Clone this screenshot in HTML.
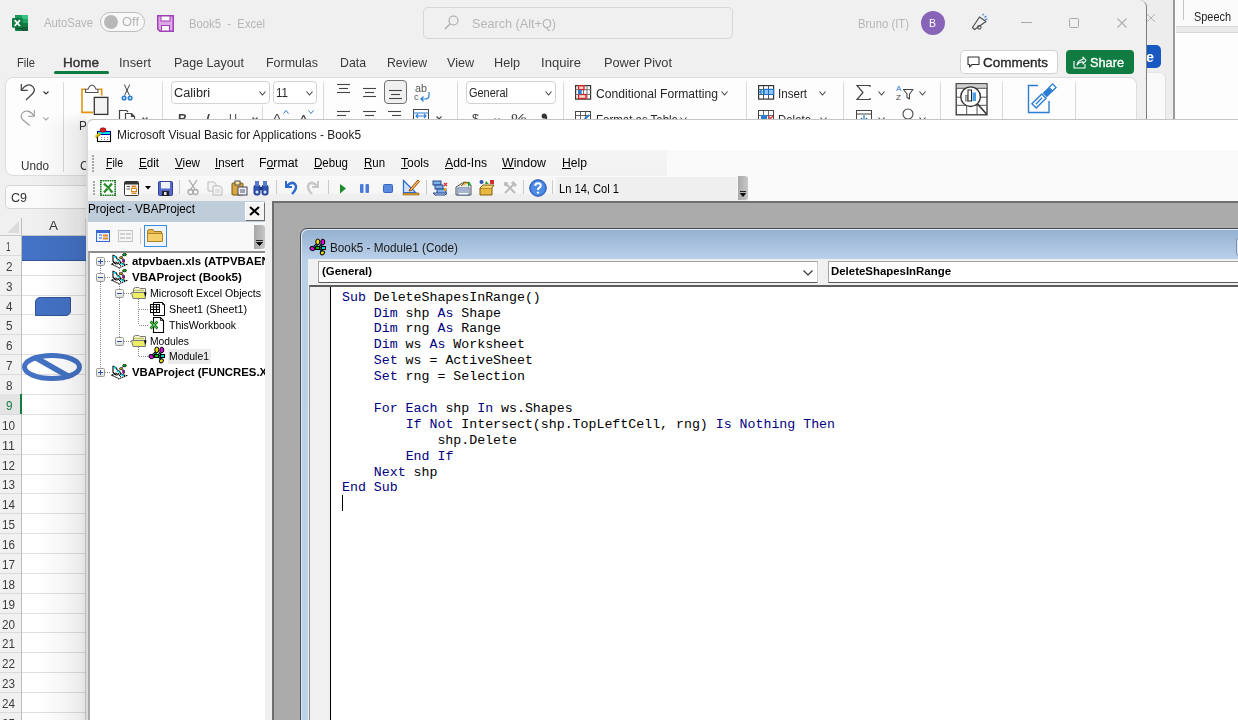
<!DOCTYPE html>
<html><head><meta charset="utf-8"><title>VBA</title><style>
*{margin:0;padding:0;box-sizing:border-box}
html,body{width:1238px;height:720px;overflow:hidden;background:#fdfdfd;font-family:"Liberation Sans",sans-serif;position:relative}
.a{position:absolute}
.t{position:absolute;white-space:pre;line-height:1}
svg.a{overflow:visible}
.k{color:#00007f}
</style></head><body>
<div class="a" style="left:1146px;top:0px;width:92px;height:720px;background:#fdfdfd;"></div>
<div class="a" style="left:1146px;top:0px;width:28px;height:120px;background:#ededed;"></div>
<div class="a" style="left:1173px;top:0px;width:2px;height:120px;background:#9a9a9a;"></div>
<div class="a" style="left:1176px;top:0px;width:62px;height:26px;background:#fbfbfb;"></div>
<div class="a" style="left:1176px;top:26px;width:62px;height:7px;background:#ebebeb;border-top:1px solid #d6d6d6;border-bottom:1px solid #d6d6d6;"></div>
<div class="a" style="left:1183px;top:0px;width:1px;height:20px;background:#c6c6c6;"></div>
<div class="t" style="left:1194px;top:11px;font-size:12.5px;color:#1f1f1f;font-family:'Liberation Sans',sans-serif;transform:scaleX(0.8727);transform-origin:0 0;">Speech</div>
<svg class="a" style="left:1146px;top:13px;" width="10" height="10" viewBox="0 0 10 10"><path d="M1 1L9 9M9 1L1 9" stroke="#b4b4b4" stroke-width="1"/></svg>
<div class="a" style="left:1140px;top:45px;width:21px;height:23px;background:#1858c3;border-radius:5px;"></div>
<div class="t" style="left:1146px;top:49px;font-size:15px;color:#fff;font-family:'Liberation Sans',sans-serif;font-weight:bold;transform:scaleX(0.9589);transform-origin:0 0;">e</div>
<div class="a" style="left:1146px;top:72px;width:20px;height:48px;background:#f9f9f9;border-top-right-radius:6px;border-right:1px solid #dedede;border-top:1px solid #e6e6e6;"></div>
<div class="a" style="left:0px;top:0px;width:1147px;height:720px;background:#f0f0f0;border-right:1px solid #7d7d7d;border-top-right-radius:7px;"></div>
<svg class="a" style="left:12px;top:15px;" width="17" height="17" viewBox="0 0 17 17"><rect x="3" y="0" width="13" height="16" rx="1" fill="#107c41"/><rect x="3" y="0" width="6.5" height="4" fill="#1f9560"/><rect x="9.5" y="0" width="6.5" height="4" fill="#33c481"/><rect x="9.5" y="4" width="6.5" height="4" fill="#21a366"/><rect x="9.5" y="12" width="6.5" height="4" fill="#185c37"/><rect x="3" y="12.5" width="8" height="1.5" fill="#0b3f22" opacity="0.6"/><rect x="0" y="3" width="10.7" height="9.7" rx="1" fill="#107c41"/><path d="M2.6 5.2L8 11M8 5.2L2.6 11" stroke="#fff" stroke-width="1.7"/></svg>
<div class="t" style="left:44px;top:17px;font-size:12.5px;color:#b6b6b6;font-family:'Liberation Sans',sans-serif;transform:scaleX(0.9039);transform-origin:0 0;">AutoSave</div>
<div class="a" style="left:100px;top:12px;width:45px;height:20px;background:#f8f8f8;border:1px solid #bdbdbd;border-radius:10px;"></div>
<div class="a" style="left:104px;top:15px;width:14px;height:14px;background:#b8b8b8;border-radius:7px;"></div>
<div class="t" style="left:122px;top:16px;font-size:12.5px;color:#b6b6b6;font-family:'Liberation Sans',sans-serif;transform:scaleX(1.0339);transform-origin:0 0;">Off</div>
<svg class="a" style="left:157px;top:15px;" width="17" height="17" viewBox="0 0 17 17"><path d="M0.75 0.75H16.25V16.25H3L0.75 14Z" fill="#dfa6ea" stroke="#a040b8" stroke-width="1.5"/><rect x="4" y="1" width="9" height="5" fill="#fafafa" stroke="#a040b8" stroke-width="1"/><rect x="4.5" y="10.5" width="8" height="5.5" fill="#fafafa" stroke="#a040b8" stroke-width="1"/></svg>
<div class="t" style="left:189px;top:18px;font-size:12.5px;color:#b6b6b6;font-family:'Liberation Sans',sans-serif;transform:scaleX(0.9041);transform-origin:0 0;">Book5  -  Excel</div>
<div class="a" style="left:423px;top:7px;width:310px;height:32px;background:#f0f0f0;border:1px solid #d6d6d6;border-radius:5px;"></div>
<svg class="a" style="left:444px;top:15px;" width="15" height="15" viewBox="0 0 15 15"><circle cx="9.5" cy="5.5" r="4.5" fill="none" stroke="#a6a6a6" stroke-width="1.1"/><path d="M6.3 8.7L1 14" stroke="#a6a6a6" stroke-width="1.2"/></svg>
<div class="t" style="left:472px;top:18px;font-size:12.5px;color:#b6b6b6;font-family:'Liberation Sans',sans-serif;transform:scaleX(1.0118);transform-origin:0 0;">Search (Alt+Q)</div>
<div class="t" style="left:858px;top:18px;font-size:12.5px;color:#b6b6b6;font-family:'Liberation Sans',sans-serif;transform:scaleX(0.9064);transform-origin:0 0;">Bruno (IT)</div>
<div class="a" style="left:921px;top:11px;width:24px;height:24px;background:#8764b8;border-radius:12px;"></div>
<div class="t" style="left:929px;top:18px;font-size:10.5px;color:#fff;font-family:'Liberation Sans',sans-serif;transform:scaleX(0.9995);transform-origin:0 0;">B</div>
<svg class="a" style="left:971px;top:13px;" width="18" height="18" viewBox="0 0 18 18"><path d="M1.5 14.5L8.5 4L15 8.5L3.5 16.5Z" fill="none" stroke="#505050" stroke-width="1.2" stroke-linejoin="round"/><circle cx="8.3" cy="14.3" r="1.8" fill="none" stroke="#505050" stroke-width="1.1"/><path d="M11.5 2.5L12.5 0.8M13.5 4.5L15.5 3M14 6.5L16.5 6" stroke="#2d7fd0" stroke-width="1.1"/></svg>
<div class="a" style="left:1021px;top:22px;width:11px;height:1px;background:#a8a8a8;"></div>
<div class="a" style="left:1069px;top:18px;width:10px;height:10px;border:1px solid #a8a8a8;border-radius:1.5px;"></div>
<svg class="a" style="left:1117px;top:18px;" width="10" height="10" viewBox="0 0 10 10"><path d="M0.5 0.5L9.5 9.5M9.5 0.5L0.5 9.5" stroke="#b0b0b0" stroke-width="1.1"/></svg>
<div class="t" style="left:17px;top:56px;font-size:13px;color:#3a3a3a;font-family:'Liberation Sans',sans-serif;transform:scaleX(0.8593);transform-origin:0 0;">File</div>
<div class="t" style="left:63px;top:56px;font-size:13px;color:#333;font-family:'Liberation Sans',sans-serif;transform:scaleX(1.0381);transform-origin:0 0;-webkit-text-stroke:0.4px #333;">Home</div>
<div class="t" style="left:119px;top:56px;font-size:13px;color:#3a3a3a;font-family:'Liberation Sans',sans-serif;transform:scaleX(0.9842);transform-origin:0 0;">Insert</div>
<div class="t" style="left:174px;top:56px;font-size:13px;color:#3a3a3a;font-family:'Liberation Sans',sans-serif;transform:scaleX(0.9588);transform-origin:0 0;">Page Layout</div>
<div class="t" style="left:266px;top:56px;font-size:13px;color:#3a3a3a;font-family:'Liberation Sans',sans-serif;transform:scaleX(0.9598);transform-origin:0 0;">Formulas</div>
<div class="t" style="left:340px;top:56px;font-size:13px;color:#3a3a3a;font-family:'Liberation Sans',sans-serif;transform:scaleX(0.9468);transform-origin:0 0;">Data</div>
<div class="t" style="left:387px;top:56px;font-size:13px;color:#3a3a3a;font-family:'Liberation Sans',sans-serif;transform:scaleX(0.9384);transform-origin:0 0;">Review</div>
<div class="t" style="left:447px;top:56px;font-size:13px;color:#3a3a3a;font-family:'Liberation Sans',sans-serif;transform:scaleX(0.9662);transform-origin:0 0;">View</div>
<div class="t" style="left:494px;top:56px;font-size:13px;color:#3a3a3a;font-family:'Liberation Sans',sans-serif;transform:scaleX(0.9724);transform-origin:0 0;">Help</div>
<div class="t" style="left:541px;top:56px;font-size:13px;color:#3a3a3a;font-family:'Liberation Sans',sans-serif;transform:scaleX(1.0063);transform-origin:0 0;">Inquire</div>
<div class="t" style="left:604px;top:56px;font-size:13px;color:#3a3a3a;font-family:'Liberation Sans',sans-serif;transform:scaleX(0.9803);transform-origin:0 0;">Power Pivot</div>
<div class="a" style="left:54px;top:71px;width:55px;height:3px;background:#107c41;border-radius:1.5px;"></div>
<div class="a" style="left:960px;top:50px;width:98px;height:24px;background:#ffffff;border:1px solid #d2d2d2;border-radius:4px;"></div>
<svg class="a" style="left:967px;top:56px;" width="13" height="12" viewBox="0 0 13 12"><path d="M1 1H12V8.5H5L2.5 11V8.5H1Z" fill="none" stroke="#333" stroke-width="1.1" stroke-linejoin="round"/></svg>
<div class="t" style="left:983px;top:56px;font-size:13.5px;color:#262626;font-family:'Liberation Sans',sans-serif;transform:scaleX(0.9959);transform-origin:0 0;-webkit-text-stroke:0.35px #262626;">Comments</div>
<div class="a" style="left:1066px;top:50px;width:68px;height:24px;background:#107c41;border-radius:4px;"></div>
<svg class="a" style="left:1073px;top:55px;" width="14" height="14" viewBox="0 0 14 14"><path d="M1 6V13H12V9" fill="none" stroke="#fff" stroke-width="1.1"/><path d="M4 10Q5 5 10 4.5V2L13 5.5L10 9V6.8Q6 7 4 10Z" fill="none" stroke="#fff" stroke-width="1.1" stroke-linejoin="round"/></svg>
<div class="t" style="left:1090px;top:56px;font-size:13.5px;color:#ffffff;font-family:'Liberation Sans',sans-serif;transform:scaleX(0.9438);transform-origin:0 0;-webkit-text-stroke:0.35px #fff;">Share</div>
<div class="a" style="left:5px;top:77px;width:1132px;height:99px;background:#fdfdfd;border:1px solid #dedede;border-radius:8px;"></div>
<svg class="a" style="left:19px;top:83px;" width="18" height="18" viewBox="0 0 18 18"><path d="M2.3 1V7.3H8.7" fill="none" stroke="#444" stroke-width="1.2"/><path d="M2.8 6.8C6 1.5 11 0.5 14 3.8C16.3 6.5 15.3 9 13 11.2L7 17" fill="none" stroke="#444" stroke-width="1.2"/></svg>
<svg class="a" style="left:43px;top:91px;" width="6" height="4" viewBox="0 0 6 4"><path d="M0.5 0.5L3.0 3L5.5 0.5" fill="none" stroke="#333" stroke-width="1.1"/></svg>
<svg class="a" style="left:19px;top:108px;" width="18" height="19" viewBox="0 0 18 19"><path d="M15.3 2V8.3H9" fill="none" stroke="#999" stroke-width="1.1"/><path d="M14.8 7.8C11.5 2.5 6.5 1.5 3.5 5C1.3 7.5 2 10 4 12L10.7 17.5" fill="none" stroke="#999" stroke-width="1.1"/></svg>
<svg class="a" style="left:43px;top:117px;" width="6" height="4" viewBox="0 0 6 4"><path d="M0.5 0.5L3.0 3L5.5 0.5" fill="none" stroke="#aaa" stroke-width="1.1"/></svg>
<div class="t" style="left:21px;top:160px;font-size:12.5px;color:#333;font-family:'Liberation Sans',sans-serif;transform:scaleX(0.9370);transform-origin:0 0;">Undo</div>
<div class="a" style="left:63px;top:82px;width:1px;height:90px;background:#dadada;"></div>
<svg class="a" style="left:80px;top:84px;" width="30" height="32" viewBox="0 0 30 32"><path d="M5.5 5.2H2V28.4H13M18.5 5.2H21.7V11.5" fill="none" stroke="#e8940c" stroke-width="1.6"/><path d="M5.5 8.5V5.2H8Q9.5 1.2 12 1.2Q14.5 1.2 16 5.2H18V8.5Z" fill="#fdfdfd" stroke="#555" stroke-width="1.1"/><rect x="14.3" y="13.4" width="13.5" height="17" fill="#f3f3f3" stroke="#333" stroke-width="1.3"/></svg>
<div class="t" style="left:79px;top:120px;font-size:12.5px;color:#333;font-family:'Liberation Sans',sans-serif;transform:scaleX(0.9385);transform-origin:0 0;">Paste</div>
<div class="t" style="left:80px;top:160px;font-size:12.5px;color:#333;font-family:'Liberation Sans',sans-serif;transform:scaleX(0.9719);transform-origin:0 0;">Clipboard</div>
<svg class="a" style="left:120px;top:84px;" width="14" height="17" viewBox="0 0 14 17"><path d="M4.3 0.5L9.5 11.5M9.8 0.5L4.5 11.5" stroke="#444" stroke-width="1"/><circle cx="4.1" cy="14" r="1.8" fill="#d8e8f8" stroke="#2b7cd3" stroke-width="1.5"/><circle cx="10.1" cy="14" r="1.8" fill="#d8e8f8" stroke="#2b7cd3" stroke-width="1.5"/></svg>
<svg class="a" style="left:118px;top:109px;" width="18" height="12" viewBox="0 0 18 12"><path d="M1.5 12V1.5H8.5L10 3" fill="none" stroke="#444" stroke-width="1.2"/><path d="M7.5 12V4.5H13.5L16.5 7.5V12M13.5 4.5V7.5H16.5" fill="none" stroke="#444" stroke-width="1.2"/></svg>
<svg class="a" style="left:142px;top:117px;" width="6" height="4" viewBox="0 0 6 4"><path d="M0.5 0.5L3.0 3L5.5 0.5" fill="none" stroke="#444" stroke-width="1.1"/></svg>
<div class="a" style="left:162px;top:82px;width:1px;height:90px;background:#dadada;"></div>
<div class="a" style="left:171px;top:81px;width:99px;height:23px;background:#ffffff;border:1px solid #d3d3d3;border-radius:4px;"></div>
<div class="t" style="left:174px;top:87px;font-size:12.5px;color:#262626;font-family:'Liberation Sans',sans-serif;transform:scaleX(1.0162);transform-origin:0 0;">Calibri</div>
<svg class="a" style="left:259px;top:91px;" width="7" height="5" viewBox="0 0 7 5"><path d="M0.5 0.5L3.5 4L6.5 0.5" fill="none" stroke="#444" stroke-width="1.1"/></svg>
<div class="a" style="left:273px;top:81px;width:44px;height:23px;background:#ffffff;border:1px solid #d3d3d3;border-radius:4px;"></div>
<div class="t" style="left:276px;top:87px;font-size:12.5px;color:#262626;font-family:'Liberation Sans',sans-serif;transform:scaleX(0.9247);transform-origin:0 0;">11</div>
<svg class="a" style="left:306px;top:91px;" width="7" height="5" viewBox="0 0 7 5"><path d="M0.5 0.5L3.5 4L6.5 0.5" fill="none" stroke="#444" stroke-width="1.1"/></svg>
<div class="t" style="left:178px;top:113px;font-size:12.5px;color:#444;font-family:'Liberation Sans',sans-serif;font-weight:bold;transform:scaleX(0.9970);transform-origin:0 0;">B</div>
<div class="t" style="left:205px;top:113px;font-size:12.5px;color:#444;font-family:'Liberation Sans',sans-serif;transform:scaleX(1.4398);transform-origin:0 0;font-style:italic;">I</div>
<div class="t" style="left:229px;top:113px;font-size:12.5px;color:#444;font-family:'Liberation Sans',sans-serif;transform:scaleX(0.8862);transform-origin:0 0;">U</div>
<svg class="a" style="left:252px;top:117px;" width="6" height="4" viewBox="0 0 6 4"><path d="M0.5 0.5L3.0 3L5.5 0.5" fill="none" stroke="#444" stroke-width="1.1"/></svg>
<div class="a" style="left:262px;top:106px;width:1px;height:14px;background:#dadada;"></div>
<div class="t" style="left:272px;top:113px;font-size:12.5px;color:#444;font-family:'Liberation Sans',sans-serif;transform:scaleX(1.1993);transform-origin:0 0;">A</div>
<svg class="a" style="left:283px;top:110px;" width="6" height="4" viewBox="0 0 6 4"><path d="M0.5 3.5L3 0.5L5.5 3.5" fill="none" stroke="#2b7cd3" stroke-width="1"/></svg>
<div class="t" style="left:299px;top:114px;font-size:11px;color:#444;font-family:'Liberation Sans',sans-serif;transform:scaleX(1.2266);transform-origin:0 0;">A</div>
<svg class="a" style="left:308px;top:110px;" width="6" height="4" viewBox="0 0 6 4"><path d="M0.5 0.5L3 3.5L5.5 0.5" fill="none" stroke="#2b7cd3" stroke-width="1"/></svg>
<div class="a" style="left:323px;top:82px;width:1px;height:90px;background:#dadada;"></div>
<svg class="a" style="left:337px;top:84px;" width="16" height="12" viewBox="0 0 16 12"><path d="M0 0.5H13" stroke="#444" stroke-width="1.1"/><path d="M2 4.5H11" stroke="#444" stroke-width="1.1"/><path d="M0 8.5H13" stroke="#444" stroke-width="1.1"/></svg>
<svg class="a" style="left:363px;top:88px;" width="16" height="12" viewBox="0 0 16 12"><path d="M0 0.5H13" stroke="#444" stroke-width="1.1"/><path d="M2 4.5H11" stroke="#444" stroke-width="1.1"/><path d="M0 8.5H13" stroke="#444" stroke-width="1.1"/></svg>
<div class="a" style="left:384px;top:80px;width:23px;height:24px;background:#f0f0f0;border:1.5px solid #707070;border-radius:4px;"></div>
<svg class="a" style="left:389px;top:90px;" width="16" height="12" viewBox="0 0 16 12"><path d="M0 0.5H13" stroke="#444" stroke-width="1.1"/><path d="M2 4.5H11" stroke="#444" stroke-width="1.1"/><path d="M0 8.5H13" stroke="#444" stroke-width="1.1"/></svg>
<div class="t" style="left:415px;top:84px;font-size:10px;color:#555;font-family:'Liberation Sans',sans-serif;transform:scaleX(1.0788);transform-origin:0 0;">ab</div>
<svg class="a" style="left:414px;top:92px;" width="17" height="10" viewBox="0 0 17 10"><text x="0" y="8" font-size="9" fill="#555" font-family="Liberation Sans">c</text><path d="M15 0V4Q15 7 11 7H7M9.5 4.5L7 7L9.5 9.5" fill="none" stroke="#2b7cd3" stroke-width="1.2"/></svg>
<svg class="a" style="left:337px;top:111px;" width="16" height="12" viewBox="0 0 16 12"><path d="M0 0.5H13" stroke="#444" stroke-width="1.1"/><path d="M0 4.5H9" stroke="#444" stroke-width="1.1"/><path d="M0 8.5H13" stroke="#444" stroke-width="1.1"/></svg>
<svg class="a" style="left:363px;top:111px;" width="16" height="12" viewBox="0 0 16 12"><path d="M0 0.5H13" stroke="#444" stroke-width="1.1"/><path d="M2 4.5H11" stroke="#444" stroke-width="1.1"/><path d="M0 8.5H13" stroke="#444" stroke-width="1.1"/></svg>
<svg class="a" style="left:388px;top:111px;" width="16" height="12" viewBox="0 0 16 12"><path d="M0 0.5H13" stroke="#444" stroke-width="1.1"/><path d="M4 4.5H13" stroke="#444" stroke-width="1.1"/><path d="M0 8.5H13" stroke="#444" stroke-width="1.1"/></svg>
<svg class="a" style="left:413px;top:109px;" width="16" height="11" viewBox="0 0 16 11"><rect x="0.5" y="0.5" width="15" height="11" fill="none" stroke="#444"/><path d="M0 4H16" stroke="#2b7cd3"/><path d="M3 7H13M5 5L3 7L5 9M11 5L13 7L11 9" fill="none" stroke="#2b7cd3" stroke-width="1.1"/></svg>
<svg class="a" style="left:436px;top:116px;" width="6" height="4" viewBox="0 0 6 4"><path d="M0.5 0.5L3.0 3L5.5 0.5" fill="none" stroke="#444" stroke-width="1.1"/></svg>
<div class="a" style="left:457px;top:82px;width:1px;height:90px;background:#dadada;"></div>
<div class="a" style="left:466px;top:81px;width:90px;height:23px;background:#ffffff;border:1px solid #d3d3d3;border-radius:4px;"></div>
<div class="t" style="left:469px;top:87px;font-size:12.5px;color:#262626;font-family:'Liberation Sans',sans-serif;transform:scaleX(0.8770);transform-origin:0 0;">General</div>
<svg class="a" style="left:545px;top:91px;" width="7" height="5" viewBox="0 0 7 5"><path d="M0.5 0.5L3.5 4L6.5 0.5" fill="none" stroke="#444" stroke-width="1.1"/></svg>
<div class="t" style="left:472px;top:113px;font-size:12.5px;color:#444;font-family:'Liberation Sans',sans-serif;transform:scaleX(1.0069);transform-origin:0 0;">$</div>
<svg class="a" style="left:494px;top:118px;" width="6" height="4" viewBox="0 0 6 4"><path d="M0.5 0.5L3.0 3L5.5 0.5" fill="none" stroke="#444" stroke-width="1.1"/></svg>
<div class="t" style="left:511px;top:112px;font-size:13px;color:#444;font-family:'Liberation Sans',sans-serif;transform:scaleX(1.3842);transform-origin:0 0;">%</div>
<svg class="a" style="left:541px;top:113px;" width="7" height="9" viewBox="0 0 7 9"><circle cx="3.2" cy="3" r="2.6" fill="#333"/><path d="M5.6 3.5Q5.5 7 2.5 8.5" fill="none" stroke="#333" stroke-width="1.6"/></svg>
<div class="a" style="left:563px;top:82px;width:1px;height:90px;background:#dadada;"></div>
<svg class="a" style="left:575px;top:85px;" width="17" height="15" viewBox="0 0 17 15"><rect x="0.6" y="0.6" width="15" height="13.5" fill="#fff" stroke="#333" stroke-width="1.2"/><path d="M3.5 0V14M8.5 0V14M12 0V14M0 4.7H16M0 9.5H16" stroke="#666" stroke-width="0.9"/><rect x="3.5" y="0.8" width="5.5" height="3.8" fill="#f6d8d0" stroke="#e02020" stroke-width="1.3"/><rect x="3.5" y="9.5" width="7.5" height="4" fill="#f6d8d0" stroke="#e02020" stroke-width="1.3"/><rect x="3.2" y="4.7" width="3.5" height="4.8" fill="#2b7cd3"/></svg>
<div class="t" style="left:596px;top:88px;font-size:12.5px;color:#262626;font-family:'Liberation Sans',sans-serif;transform:scaleX(0.9701);transform-origin:0 0;">Conditional Formatting</div>
<svg class="a" style="left:721px;top:91px;" width="7" height="5" viewBox="0 0 7 5"><path d="M0.5 0.5L3.5 4L6.5 0.5" fill="none" stroke="#444" stroke-width="1.1"/></svg>
<svg class="a" style="left:575px;top:111px;" width="17" height="10" viewBox="0 0 17 10"><rect x="0.5" y="0.5" width="15" height="10" fill="#fff" stroke="#444"/><path d="M0 4.5H16M5.5 0V11M10.5 0V11" stroke="#444" stroke-width="0.8"/><path d="M8 10L14 4" stroke="#2b7cd3" stroke-width="2"/></svg>
<div class="t" style="left:596px;top:114px;font-size:12.5px;color:#262626;font-family:'Liberation Sans',sans-serif;transform:scaleX(0.9173);transform-origin:0 0;">Format as Table</div>
<svg class="a" style="left:680px;top:117px;" width="7" height="5" viewBox="0 0 7 5"><path d="M0.5 0.5L3.5 4L6.5 0.5" fill="none" stroke="#444" stroke-width="1.1"/></svg>
<div class="a" style="left:746px;top:82px;width:1px;height:90px;background:#dadada;"></div>
<svg class="a" style="left:758px;top:85px;" width="17" height="15" viewBox="0 0 17 15"><rect x="0.6" y="0.6" width="15" height="13.5" fill="#fff" stroke="#333" stroke-width="1.2"/><path d="M5.5 0V14M10.5 0V14M0 4.5H16M0 9.5H16" stroke="#444" stroke-width="0.9"/><rect x="6" y="4.3" width="9.6" height="5.2" fill="#8cc4f4" stroke="#1a6fd0" stroke-width="1"/><path d="M10.5 4.5V9.5" stroke="#1a6fd0"/><path d="M7 6.9H1.5M4.2 4.3L1.5 6.9L4.2 9.5" fill="none" stroke="#2b8ce0" stroke-width="1.4"/></svg>
<div class="t" style="left:778px;top:88px;font-size:12.5px;color:#262626;font-family:'Liberation Sans',sans-serif;transform:scaleX(0.9276);transform-origin:0 0;">Insert</div>
<svg class="a" style="left:819px;top:91px;" width="7" height="5" viewBox="0 0 7 5"><path d="M0.5 0.5L3.5 4L6.5 0.5" fill="none" stroke="#444" stroke-width="1.1"/></svg>
<svg class="a" style="left:758px;top:110px;" width="17" height="12" viewBox="0 0 17 12"><rect x="0.5" y="0.5" width="15" height="12" fill="#fff" stroke="#444"/><path d="M0 5.5H16M5.5 0V13M10.5 0V13" stroke="#444" stroke-width="0.8"/><rect x="3" y="5" width="6" height="6" fill="#2b7cd3"/><path d="M10 6L15 11M15 6L10 11" stroke="#e23c3c" stroke-width="1.3"/></svg>
<div class="t" style="left:778px;top:114px;font-size:12.5px;color:#262626;font-family:'Liberation Sans',sans-serif;transform:scaleX(0.9133);transform-origin:0 0;">Delete</div>
<svg class="a" style="left:820px;top:117px;" width="7" height="5" viewBox="0 0 7 5"><path d="M0.5 0.5L3.5 4L6.5 0.5" fill="none" stroke="#444" stroke-width="1.1"/></svg>
<div class="a" style="left:843px;top:82px;width:1px;height:90px;background:#dadada;"></div>
<svg class="a" style="left:856px;top:85px;" width="15" height="15" viewBox="0 0 15 15"><path d="M14 2V0.5H1L7 7.5L1 14.5H14V13" fill="none" stroke="#444" stroke-width="1.2"/></svg>
<svg class="a" style="left:878px;top:91px;" width="7" height="5" viewBox="0 0 7 5"><path d="M0.5 0.5L3.5 4L6.5 0.5" fill="none" stroke="#444" stroke-width="1.1"/></svg>
<svg class="a" style="left:896px;top:84px;" width="19" height="17" viewBox="0 0 19 17"><text x="0" y="7" font-size="8" fill="#2b7cd3" font-family="Liberation Sans">A</text><text x="0" y="16" font-size="8" fill="#444" font-family="Liberation Sans">Z</text><path d="M7.5 5.5H17L13.5 10V15L11 13.5V10Z" fill="none" stroke="#444" stroke-width="1.1" stroke-linejoin="round"/></svg>
<svg class="a" style="left:919px;top:91px;" width="7" height="5" viewBox="0 0 7 5"><path d="M0.5 0.5L3.5 4L6.5 0.5" fill="none" stroke="#444" stroke-width="1.1"/></svg>
<svg class="a" style="left:856px;top:110px;" width="16" height="12" viewBox="0 0 16 12"><rect x="0.5" y="0.5" width="15" height="12" fill="#fff" stroke="#444"/><path d="M0 4H16" stroke="#444"/><path d="M8 5V11M5 8L8 11L11 8" fill="none" stroke="#2b7cd3" stroke-width="1.2"/></svg>
<svg class="a" style="left:878px;top:117px;" width="7" height="5" viewBox="0 0 7 5"><path d="M0.5 0.5L3.5 4L6.5 0.5" fill="none" stroke="#444" stroke-width="1.1"/></svg>
<svg class="a" style="left:902px;top:108px;" width="13" height="13" viewBox="0 0 13 13"><circle cx="6" cy="6" r="5" fill="none" stroke="#444" stroke-width="1.1"/></svg>
<svg class="a" style="left:919px;top:117px;" width="7" height="5" viewBox="0 0 7 5"><path d="M0.5 0.5L3.5 4L6.5 0.5" fill="none" stroke="#444" stroke-width="1.1"/></svg>
<div class="a" style="left:940px;top:82px;width:1px;height:90px;background:#dadada;"></div>
<svg class="a" style="left:955px;top:83px;" width="33" height="33" viewBox="0 0 33 33"><rect x="1.2" y="0.8" width="30.8" height="31" fill="#fff" stroke="#333" stroke-width="1.3"/><rect x="1.8" y="1.4" width="29.6" height="4" fill="#cfcfcf"/><path d="M1 5.3H32M1 14.2H32M1 22.3H32M11.7 22V32M22 22V32" stroke="#555" stroke-width="1"/><circle cx="15.6" cy="13.7" r="9.8" fill="#fff" stroke="#333" stroke-width="1.4"/><path d="M22.3 20.8L31.5 31" stroke="#333" stroke-width="1.6"/><rect x="10.5" y="12.5" width="2.5" height="5.5" fill="#bbb" stroke="#666" stroke-width="0.6"/><rect x="13" y="7" width="3.5" height="11" fill="#fff" stroke="#222" stroke-width="1"/><rect x="17.5" y="9.5" width="3.5" height="8.5" fill="#4a9ee8"/></svg>
<div class="a" style="left:1002px;top:82px;width:1px;height:90px;background:#dadada;"></div>
<svg class="a" style="left:1026px;top:83px;" width="32" height="32" viewBox="0 0 32 32"><path d="M2.5 17V29.5H23V18M2.5 17V2.5H12" fill="none" stroke="#2b7cd3" stroke-width="1.4"/><g transform="rotate(-45 13 18)"><rect x="6" y="15" width="14" height="6" fill="#fff" stroke="#2b7cd3" stroke-width="1.4"/><path d="M8.5 18H17.5" stroke="#2b7cd3" stroke-width="1.3"/></g><g transform="rotate(-45 23 8)"><rect x="17" y="5" width="8" height="6" fill="#2b7cd3"/><rect x="25.5" y="5.5" width="5" height="5" fill="#fff" stroke="#2b7cd3" stroke-width="1.3"/></g></svg>
<div class="a" style="left:1075px;top:82px;width:1px;height:90px;background:#dadada;"></div>
<div class="a" style="left:5px;top:185px;width:120px;height:24px;background:#fbfbfb;border:1px solid #d6d6d6;border-radius:4px;"></div>
<div class="t" style="left:11px;top:191px;font-size:13px;color:#303030;font-family:'Liberation Sans',sans-serif;transform:scaleX(0.9628);transform-origin:0 0;">C9</div>
<div class="a" style="left:0px;top:218px;width:87px;height:502px;background:#ffffff;"></div>
<div class="a" style="left:0px;top:218px;width:21px;height:502px;background:#f1f1f1;"></div>
<div class="a" style="left:22px;top:218px;width:65px;height:17px;background:#f0f0f0;"></div>
<svg class="a" style="left:6px;top:220px;" width="14" height="14" viewBox="0 0 14 14"><path d="M13 1V13H1Z" fill="#dcdcdc"/></svg>
<div class="t" style="left:49px;top:219px;font-size:13px;color:#3c3c3c;font-family:'Liberation Sans',sans-serif;transform:scaleX(1.0379);transform-origin:0 0;">A</div>
<div class="a" style="left:21px;top:218px;width:1px;height:502px;background:#bdbdbd;"></div>
<div class="a" style="left:0px;top:235px;width:87px;height:1px;background:#c8c8c8;"></div>
<div class="a" style="left:0px;top:255px;width:21px;height:1px;background:#dadada;"></div>
<div class="a" style="left:22px;top:255px;width:65px;height:1px;background:#e0e0e0;"></div>
<div class="t" style="left:6px;top:240px;font-size:13px;color:#3c3c3c;font-family:'Liberation Sans',sans-serif;transform:scaleX(0.6224);transform-origin:0 0;">1</div>
<div class="a" style="left:0px;top:275px;width:21px;height:1px;background:#dadada;"></div>
<div class="a" style="left:22px;top:275px;width:65px;height:1px;background:#e0e0e0;"></div>
<div class="t" style="left:5.5px;top:260px;font-size:13px;color:#3c3c3c;font-family:'Liberation Sans',sans-serif;transform:scaleX(0.8990);transform-origin:0 0;">2</div>
<div class="a" style="left:0px;top:295px;width:21px;height:1px;background:#dadada;"></div>
<div class="a" style="left:22px;top:295px;width:65px;height:1px;background:#e0e0e0;"></div>
<div class="t" style="left:5.5px;top:280px;font-size:13px;color:#3c3c3c;font-family:'Liberation Sans',sans-serif;transform:scaleX(0.8990);transform-origin:0 0;">3</div>
<div class="a" style="left:0px;top:314px;width:21px;height:1px;background:#dadada;"></div>
<div class="a" style="left:22px;top:314px;width:65px;height:1px;background:#e0e0e0;"></div>
<div class="t" style="left:5.5px;top:300px;font-size:13px;color:#3c3c3c;font-family:'Liberation Sans',sans-serif;transform:scaleX(0.8990);transform-origin:0 0;">4</div>
<div class="a" style="left:0px;top:334px;width:21px;height:1px;background:#dadada;"></div>
<div class="a" style="left:22px;top:334px;width:65px;height:1px;background:#e0e0e0;"></div>
<div class="t" style="left:5.5px;top:319px;font-size:13px;color:#3c3c3c;font-family:'Liberation Sans',sans-serif;transform:scaleX(0.8990);transform-origin:0 0;">5</div>
<div class="a" style="left:0px;top:354px;width:21px;height:1px;background:#dadada;"></div>
<div class="a" style="left:22px;top:354px;width:65px;height:1px;background:#e0e0e0;"></div>
<div class="t" style="left:5.5px;top:339px;font-size:13px;color:#3c3c3c;font-family:'Liberation Sans',sans-serif;transform:scaleX(0.8990);transform-origin:0 0;">6</div>
<div class="a" style="left:0px;top:374px;width:21px;height:1px;background:#dadada;"></div>
<div class="a" style="left:22px;top:374px;width:65px;height:1px;background:#e0e0e0;"></div>
<div class="t" style="left:5.5px;top:359px;font-size:13px;color:#3c3c3c;font-family:'Liberation Sans',sans-serif;transform:scaleX(0.8990);transform-origin:0 0;">7</div>
<div class="a" style="left:0px;top:394px;width:21px;height:1px;background:#dadada;"></div>
<div class="a" style="left:22px;top:394px;width:65px;height:1px;background:#e0e0e0;"></div>
<div class="t" style="left:5.5px;top:379px;font-size:13px;color:#3c3c3c;font-family:'Liberation Sans',sans-serif;transform:scaleX(0.8990);transform-origin:0 0;">8</div>
<div class="a" style="left:0px;top:414px;width:21px;height:1px;background:#dadada;"></div>
<div class="a" style="left:22px;top:414px;width:65px;height:1px;background:#e0e0e0;"></div>
<div class="a" style="left:0px;top:434px;width:21px;height:1px;background:#dadada;"></div>
<div class="a" style="left:22px;top:434px;width:65px;height:1px;background:#e0e0e0;"></div>
<div class="t" style="left:2.3px;top:419px;font-size:13px;color:#3c3c3c;font-family:'Liberation Sans',sans-serif;transform:scaleX(0.8990);transform-origin:0 0;">10</div>
<div class="a" style="left:0px;top:454px;width:21px;height:1px;background:#dadada;"></div>
<div class="a" style="left:22px;top:454px;width:65px;height:1px;background:#e0e0e0;"></div>
<div class="t" style="left:2.3px;top:439px;font-size:13px;color:#3c3c3c;font-family:'Liberation Sans',sans-serif;transform:scaleX(0.9633);transform-origin:0 0;">11</div>
<div class="a" style="left:0px;top:474px;width:21px;height:1px;background:#dadada;"></div>
<div class="a" style="left:22px;top:474px;width:65px;height:1px;background:#e0e0e0;"></div>
<div class="t" style="left:2.3px;top:459px;font-size:13px;color:#3c3c3c;font-family:'Liberation Sans',sans-serif;transform:scaleX(0.8990);transform-origin:0 0;">12</div>
<div class="a" style="left:0px;top:493px;width:21px;height:1px;background:#dadada;"></div>
<div class="a" style="left:22px;top:493px;width:65px;height:1px;background:#e0e0e0;"></div>
<div class="t" style="left:2.3px;top:478px;font-size:13px;color:#3c3c3c;font-family:'Liberation Sans',sans-serif;transform:scaleX(0.8990);transform-origin:0 0;">13</div>
<div class="a" style="left:0px;top:513px;width:21px;height:1px;background:#dadada;"></div>
<div class="a" style="left:22px;top:513px;width:65px;height:1px;background:#e0e0e0;"></div>
<div class="t" style="left:2.3px;top:498px;font-size:13px;color:#3c3c3c;font-family:'Liberation Sans',sans-serif;transform:scaleX(0.8990);transform-origin:0 0;">14</div>
<div class="a" style="left:0px;top:533px;width:21px;height:1px;background:#dadada;"></div>
<div class="a" style="left:22px;top:533px;width:65px;height:1px;background:#e0e0e0;"></div>
<div class="t" style="left:2.3px;top:518px;font-size:13px;color:#3c3c3c;font-family:'Liberation Sans',sans-serif;transform:scaleX(0.8990);transform-origin:0 0;">15</div>
<div class="a" style="left:0px;top:553px;width:21px;height:1px;background:#dadada;"></div>
<div class="a" style="left:22px;top:553px;width:65px;height:1px;background:#e0e0e0;"></div>
<div class="t" style="left:2.3px;top:538px;font-size:13px;color:#3c3c3c;font-family:'Liberation Sans',sans-serif;transform:scaleX(0.8990);transform-origin:0 0;">16</div>
<div class="a" style="left:0px;top:573px;width:21px;height:1px;background:#dadada;"></div>
<div class="a" style="left:22px;top:573px;width:65px;height:1px;background:#e0e0e0;"></div>
<div class="t" style="left:2.3px;top:558px;font-size:13px;color:#3c3c3c;font-family:'Liberation Sans',sans-serif;transform:scaleX(0.8990);transform-origin:0 0;">17</div>
<div class="a" style="left:0px;top:593px;width:21px;height:1px;background:#dadada;"></div>
<div class="a" style="left:22px;top:593px;width:65px;height:1px;background:#e0e0e0;"></div>
<div class="t" style="left:2.3px;top:578px;font-size:13px;color:#3c3c3c;font-family:'Liberation Sans',sans-serif;transform:scaleX(0.8990);transform-origin:0 0;">18</div>
<div class="a" style="left:0px;top:613px;width:21px;height:1px;background:#dadada;"></div>
<div class="a" style="left:22px;top:613px;width:65px;height:1px;background:#e0e0e0;"></div>
<div class="t" style="left:2.3px;top:598px;font-size:13px;color:#3c3c3c;font-family:'Liberation Sans',sans-serif;transform:scaleX(0.8990);transform-origin:0 0;">19</div>
<div class="a" style="left:0px;top:632px;width:21px;height:1px;background:#dadada;"></div>
<div class="a" style="left:22px;top:632px;width:65px;height:1px;background:#e0e0e0;"></div>
<div class="t" style="left:2.3px;top:618px;font-size:13px;color:#3c3c3c;font-family:'Liberation Sans',sans-serif;transform:scaleX(0.8990);transform-origin:0 0;">20</div>
<div class="a" style="left:0px;top:652px;width:21px;height:1px;background:#dadada;"></div>
<div class="a" style="left:22px;top:652px;width:65px;height:1px;background:#e0e0e0;"></div>
<div class="t" style="left:2.3px;top:637px;font-size:13px;color:#3c3c3c;font-family:'Liberation Sans',sans-serif;transform:scaleX(0.8990);transform-origin:0 0;">21</div>
<div class="a" style="left:0px;top:672px;width:21px;height:1px;background:#dadada;"></div>
<div class="a" style="left:22px;top:672px;width:65px;height:1px;background:#e0e0e0;"></div>
<div class="t" style="left:2.3px;top:657px;font-size:13px;color:#3c3c3c;font-family:'Liberation Sans',sans-serif;transform:scaleX(0.8990);transform-origin:0 0;">22</div>
<div class="a" style="left:0px;top:692px;width:21px;height:1px;background:#dadada;"></div>
<div class="a" style="left:22px;top:692px;width:65px;height:1px;background:#e0e0e0;"></div>
<div class="t" style="left:2.3px;top:677px;font-size:13px;color:#3c3c3c;font-family:'Liberation Sans',sans-serif;transform:scaleX(0.8990);transform-origin:0 0;">23</div>
<div class="a" style="left:0px;top:712px;width:21px;height:1px;background:#dadada;"></div>
<div class="a" style="left:22px;top:712px;width:65px;height:1px;background:#e0e0e0;"></div>
<div class="t" style="left:2.3px;top:697px;font-size:13px;color:#3c3c3c;font-family:'Liberation Sans',sans-serif;transform:scaleX(0.8990);transform-origin:0 0;">24</div>
<div class="a" style="left:0px;top:732px;width:21px;height:1px;background:#dadada;"></div>
<div class="a" style="left:22px;top:732px;width:65px;height:1px;background:#e0e0e0;"></div>
<div class="t" style="left:2.3px;top:717px;font-size:13px;color:#3c3c3c;font-family:'Liberation Sans',sans-serif;transform:scaleX(0.8990);transform-origin:0 0;">25</div>
<div class="a" style="left:0px;top:394px;width:21px;height:20px;background:#e4e4e4;"></div>
<div class="t" style="left:5.5px;top:399px;font-size:13px;color:#107c41;font-family:'Liberation Sans',sans-serif;transform:scaleX(0.8990);transform-origin:0 0;">9</div>
<div class="a" style="left:20px;top:394px;width:2px;height:20px;background:#107c41;"></div>
<div class="a" style="left:85px;top:218px;width:1px;height:502px;background:#d4d4d4;"></div>
<div class="a" style="left:22px;top:236px;width:65px;height:25px;background:#4472c4;border-bottom:1px solid #2f5597;"></div>
<div class="a" style="left:35px;top:297px;width:36px;height:19px;background:#4472c4;border-radius:5px 0 5px 0;border:1px solid #2f5597;"></div>
<svg class="a" style="left:20px;top:351px;" width="64" height="32" viewBox="0 0 64 32"><defs><clipPath id="oc"><ellipse cx="32" cy="16" rx="30" ry="14"/></clipPath></defs><ellipse cx="32" cy="16" rx="27.5" ry="11.5" fill="none" stroke="#4472c4" stroke-width="5"/><path d="M11 4L53 28" stroke="#4472c4" stroke-width="5.5" clip-path="url(#oc)"/></svg>
<div class="a" style="left:36px;top:112px;width:51px;height:608px;background:linear-gradient(90deg,rgba(0,0,0,0) 0%,rgba(0,0,0,0.035) 55%,rgba(0,0,0,0.075) 85%,rgba(0,0,0,0.12) 100%);-webkit-mask-image:linear-gradient(to bottom,transparent 0px,#000 16px);mask-image:linear-gradient(to bottom,transparent 0px,#000 16px);"></div>
<div class="a" style="left:86px;top:119px;width:1152px;height:601px;background:#f0f0f0;border-left:2px solid #dadada;border-top:1px solid #c4c4c4;border-top-left-radius:7px;"></div>
<div class="a" style="left:88px;top:120px;width:1150px;height:30px;background:#ffffff;border-top-left-radius:6px;"></div>
<svg class="a" style="left:95px;top:126px;" width="17" height="17" viewBox="0 0 17 17"><rect x="2.5" y="5.5" width="13" height="10" fill="#fff" stroke="#000" stroke-width="1.1"/><rect x="3" y="6" width="12" height="2.5" fill="#00e0f0"/><path d="M2.5 8.5H15.5" stroke="#0000c0"/><path d="M2.5 5.5H15.5" stroke="#0000c0" stroke-width="1"/><ellipse cx="8" cy="4" rx="3" ry="2.2" fill="#e02020" stroke="#600" stroke-width="0.6"/><path d="M0.5 11L5 7.5" stroke="#e0c000" stroke-width="2.6"/><path d="M1 12L5.5 8.5" stroke="#806000" stroke-width="0.8"/><path d="M6 11.5H7M9 11.5H10M12 11.5H13M6 13.5H7M9 13.5H10M12 13.5H13" stroke="#888"/></svg>
<div class="t" style="left:117px;top:129px;font-size:12.5px;color:#1a1a1a;font-family:'Liberation Sans',sans-serif;transform:scaleX(0.9500);transform-origin:0 0;">Microsoft Visual Basic for Applications - Book5</div>
<div class="a" style="left:88px;top:150px;width:1150px;height:51px;background:#fafafa;"></div>
<div class="a" style="left:88px;top:150px;width:579px;height:26px;background:linear-gradient(#f5f5f5,#f1f1f1);"></div>
<div class="a" style="left:92px;top:155px;width:2px;height:2px;background:#a8a8a8;"></div>
<div class="a" style="left:92px;top:158px;width:2px;height:2px;background:#a8a8a8;"></div>
<div class="a" style="left:92px;top:161px;width:2px;height:2px;background:#a8a8a8;"></div>
<div class="a" style="left:92px;top:164px;width:2px;height:2px;background:#a8a8a8;"></div>
<div class="a" style="left:92px;top:167px;width:2px;height:2px;background:#a8a8a8;"></div>
<div class="a" style="left:92px;top:170px;width:2px;height:2px;background:#a8a8a8;"></div>
<div class="t" style="left:106px;top:157px;font-size:12.5px;color:#000;font-family:'Liberation Sans',sans-serif;transform:scaleX(0.8440);transform-origin:0 0;">File</div>
<div class="a" style="left:106px;top:168px;width:6px;height:1px;background:#000;"></div>
<div class="t" style="left:139px;top:157px;font-size:12.5px;color:#000;font-family:'Liberation Sans',sans-serif;transform:scaleX(0.9285);transform-origin:0 0;">Edit</div>
<div class="a" style="left:139px;top:168px;width:8px;height:1px;background:#000;"></div>
<div class="t" style="left:175px;top:157px;font-size:12.5px;color:#000;font-family:'Liberation Sans',sans-serif;transform:scaleX(0.9304);transform-origin:0 0;">View</div>
<div class="a" style="left:175px;top:168px;width:8px;height:1px;background:#000;"></div>
<div class="t" style="left:215px;top:157px;font-size:12.5px;color:#000;font-family:'Liberation Sans',sans-serif;transform:scaleX(0.9276);transform-origin:0 0;">Insert</div>
<div class="a" style="left:215px;top:168px;width:5px;height:1px;background:#000;"></div>
<div class="t" style="left:259px;top:157px;font-size:12.5px;color:#000;font-family:'Liberation Sans',sans-serif;transform:scaleX(0.9851);transform-origin:0 0;">Format</div>
<div class="a" style="left:267px;top:168px;width:7px;height:1px;background:#000;"></div>
<div class="t" style="left:314px;top:157px;font-size:12.5px;color:#000;font-family:'Liberation Sans',sans-serif;transform:scaleX(0.9230);transform-origin:0 0;">Debug</div>
<div class="a" style="left:314px;top:168px;width:8px;height:1px;background:#000;"></div>
<div class="t" style="left:364px;top:157px;font-size:12.5px;color:#000;font-family:'Liberation Sans',sans-serif;transform:scaleX(0.9158);transform-origin:0 0;">Run</div>
<div class="a" style="left:364px;top:168px;width:8px;height:1px;background:#000;"></div>
<div class="t" style="left:401px;top:157px;font-size:12.5px;color:#000;font-family:'Liberation Sans',sans-serif;transform:scaleX(0.9595);transform-origin:0 0;">Tools</div>
<div class="a" style="left:401px;top:168px;width:7px;height:1px;background:#000;"></div>
<div class="t" style="left:445px;top:157px;font-size:12.5px;color:#000;font-family:'Liberation Sans',sans-serif;transform:scaleX(0.9749);transform-origin:0 0;">Add-Ins</div>
<div class="a" style="left:445px;top:168px;width:8px;height:1px;background:#000;"></div>
<div class="t" style="left:502px;top:157px;font-size:12.5px;color:#000;font-family:'Liberation Sans',sans-serif;transform:scaleX(0.9897);transform-origin:0 0;">Window</div>
<div class="a" style="left:502px;top:168px;width:12px;height:1px;background:#000;"></div>
<div class="t" style="left:562px;top:157px;font-size:12.5px;color:#000;font-family:'Liberation Sans',sans-serif;transform:scaleX(0.9724);transform-origin:0 0;">Help</div>
<div class="a" style="left:562px;top:168px;width:9px;height:1px;background:#000;"></div>
<div class="a" style="left:88px;top:177px;width:660px;height:24px;background:linear-gradient(#f8f8f8 0px,#f6f6f6 16px,#efefef 18px,#efefef 100%);"></div>
<div class="a" style="left:93px;top:181px;width:2px;height:2px;background:#a8a8a8;"></div>
<div class="a" style="left:93px;top:184px;width:2px;height:2px;background:#a8a8a8;"></div>
<div class="a" style="left:93px;top:187px;width:2px;height:2px;background:#a8a8a8;"></div>
<div class="a" style="left:93px;top:190px;width:2px;height:2px;background:#a8a8a8;"></div>
<div class="a" style="left:93px;top:193px;width:2px;height:2px;background:#a8a8a8;"></div>
<svg class="a" style="left:100px;top:180px;" width="17" height="16" viewBox="0 0 17 16"><rect x="0.8" y="0.8" width="14.4" height="14.4" fill="#fff" stroke="#1e7a1e" stroke-width="1.6" stroke-dasharray="1.6 0.6"/><path d="M4 3.5L12.5 12.5M12 3.5L4 12.5" stroke="#2a8a2a" stroke-width="2.4"/><path d="M5 6L10 11" stroke="#a8d8a8" stroke-width="0.8"/></svg>
<svg class="a" style="left:124px;top:181px;" width="15" height="15" viewBox="0 0 15 15"><rect x="0.5" y="0.5" width="14" height="14" rx="1" fill="#fff" stroke="#333"/><rect x="1" y="1" width="13" height="2.5" fill="#333"/><path d="M2.5 5.5H6M2.5 8H6" stroke="#666" stroke-width="1"/><rect x="7.5" y="4.5" width="5" height="2" fill="#d98a20"/><rect x="7.5" y="7.5" width="5" height="3" fill="none" stroke="#d98a20"/><rect x="7.5" y="11.5" width="5" height="1.5" fill="#d98a20"/></svg>
<svg class="a" style="left:145px;top:186px;" width="6" height="4" viewBox="0 0 6 4"><path d="M0 0H6L3 3.5Z" fill="#000"/></svg>
<svg class="a" style="left:158px;top:181px;" width="15" height="15" viewBox="0 0 15 15"><rect x="0.5" y="0.5" width="14" height="14" rx="1" fill="#5468c8" stroke="#3a3f9a"/><rect x="3" y="1" width="9" height="6.5" fill="#f0f2f8"/><rect x="4" y="10" width="7" height="5" fill="#202020"/><rect x="6" y="11" width="2.5" height="3" fill="#e8e8e8"/></svg>
<div class="a" style="left:179px;top:180px;width:1px;height:14px;background:#c9c9c9;"></div>
<svg class="a" style="left:187px;top:180px;" width="12" height="16" viewBox="0 0 12 16"><path d="M2 0L8 9M10 0L4 9" stroke="#aaa" stroke-width="1.3"/><circle cx="3.5" cy="12" r="2.5" fill="none" stroke="#aaa" stroke-width="1.3"/><circle cx="8.5" cy="12" r="2.5" fill="none" stroke="#aaa" stroke-width="1.3"/></svg>
<svg class="a" style="left:207px;top:181px;" width="17" height="15" viewBox="0 0 17 15"><path d="M1 1H7L9 3V10H1Z" fill="#f4f4f4" stroke="#bbb"/><path d="M6 5H13L15 7V14H6Z" fill="#f4f4f4" stroke="#bbb"/><path d="M8 9H13M8 11H13" stroke="#ccc"/></svg>
<svg class="a" style="left:231px;top:180px;" width="17" height="16" viewBox="0 0 17 16"><rect x="1" y="3" width="11" height="12" rx="1" fill="#d9a640" stroke="#7a5a10"/><rect x="4" y="1" width="5" height="4" fill="#f4e0a0" stroke="#555"/><rect x="7" y="7" width="9" height="8" fill="#eef2f8" stroke="#445"/><path d="M9 10H14M9 12H14" stroke="#556"/></svg>
<svg class="a" style="left:253px;top:180px;" width="17" height="16" viewBox="0 0 17 16"><rect x="1" y="5" width="6" height="10" rx="2" fill="#3057b8" stroke="#1d3a80"/><rect x="9" y="5" width="6" height="10" rx="2" fill="#3057b8" stroke="#1d3a80"/><rect x="2" y="1" width="4" height="5" fill="#5a7ad0"/><rect x="10" y="1" width="4" height="5" fill="#5a7ad0"/><rect x="6" y="7" width="4" height="3" fill="#1d3a80"/><circle cx="4" cy="12" r="1.5" fill="#d8e4ff"/><circle cx="12" cy="12" r="1.5" fill="#d8e4ff"/></svg>
<div class="a" style="left:276px;top:180px;width:1px;height:14px;background:#c9c9c9;"></div>
<svg class="a" style="left:284px;top:180px;" width="14" height="15" viewBox="0 0 14 15"><path d="M2 1V7H8" fill="none" stroke="#2d6ad0" stroke-width="2"/><path d="M3 6Q7 1 11 4Q14 8 8 14" fill="none" stroke="#2d6ad0" stroke-width="2.4"/></svg>
<svg class="a" style="left:306px;top:180px;" width="14" height="15" viewBox="0 0 14 15"><path d="M12 1V7H6" fill="none" stroke="#c8c8c8" stroke-width="2"/><path d="M11 6Q7 1 3 4Q0 8 6 14" fill="none" stroke="#c8c8c8" stroke-width="2.4"/></svg>
<div class="a" style="left:328px;top:180px;width:1px;height:14px;background:#c9c9c9;"></div>
<svg class="a" style="left:340px;top:184px;" width="6" height="10" viewBox="0 0 6 10"><path d="M0 0L6 4.5L0 9.5Z" fill="#1a8a2a"/></svg>
<svg class="a" style="left:360px;top:184px;" width="9" height="9" viewBox="0 0 9 9"><rect x="0" y="0" width="3.5" height="9" rx="1" fill="#4a7ad8"/><rect x="5.5" y="0" width="3.5" height="9" rx="1" fill="#4a7ad8"/></svg>
<svg class="a" style="left:383px;top:184px;" width="10" height="9" viewBox="0 0 10 9"><rect x="0.5" y="0.5" width="9" height="8" rx="1" fill="#5a8ae0" stroke="#3a66c0"/></svg>
<svg class="a" style="left:402px;top:179px;" width="18" height="16" viewBox="0 0 18 16"><path d="M1 14H17V16H1Z" fill="#e0a030" stroke="#906010" stroke-width="0.6"/><path d="M1.5 1.5L1.5 13.5L13.5 13.5Z" fill="#cfe2f8" stroke="#2d6ad0" stroke-width="1.2"/><path d="M8 10L16 1L17.5 2.5L9.5 11.5L7 12Z" fill="#f0c040" stroke="#a04020" stroke-width="1"/></svg>
<div class="a" style="left:426px;top:180px;width:1px;height:14px;background:#c9c9c9;"></div>
<svg class="a" style="left:432px;top:180px;" width="17" height="16" viewBox="0 0 17 16"><rect x="1" y="1" width="8" height="4" fill="#7fb0e8" stroke="#2a4a90"/><rect x="3" y="5" width="8" height="4" fill="#7fb0e8" stroke="#2a4a90"/><rect x="5" y="9" width="9" height="5" fill="#7fb0e8" stroke="#2a4a90"/><path d="M1 13H15L13 15H3Z" fill="#c0d4f0" stroke="#2a4a90"/><path d="M12 3L15 6M15 3L12 6" stroke="#e03030" stroke-width="1.2"/><path d="M13 8V11" stroke="#f0a000" stroke-width="2"/></svg>
<svg class="a" style="left:455px;top:180px;" width="17" height="16" viewBox="0 0 17 16"><path d="M1 7L9 2L16 5V15H1Z" fill="#e8e8e8" stroke="#555"/><rect x="3" y="8" width="11" height="7" fill="#fff" stroke="#4a6aa0"/><path d="M4 10H13M4 12H13" stroke="#4a6aa0"/><path d="M6 6L10 2L15 3" fill="#e0b040" stroke="#806010"/><path d="M13 1L16 4L13 7Z" fill="#20a040"/></svg>
<svg class="a" style="left:478px;top:179px;" width="17" height="17" viewBox="0 0 17 17"><path d="M2 9H14V16H2Z" fill="#e8b840" stroke="#806010"/><path d="M2 9L5 6H16L14 9" fill="#f4d070" stroke="#806010"/><circle cx="3.5" cy="3" r="2" fill="#3050b0"/><rect x="12" y="1" width="4" height="4" fill="#d03030"/><path d="M8 2L11 5L7 5Z" fill="#30a030"/></svg>
<svg class="a" style="left:503px;top:181px;" width="14" height="14" viewBox="0 0 14 14"><path d="M2 2L12 12M12 2L2 12" stroke="#bdbdbd" stroke-width="2.2"/><circle cx="3" cy="3" r="2.2" fill="#bdbdbd"/><path d="M9 1L13 5" stroke="#bdbdbd" stroke-width="3"/></svg>
<div class="a" style="left:523px;top:180px;width:1px;height:14px;background:#c9c9c9;"></div>
<svg class="a" style="left:529px;top:179px;" width="18" height="18" viewBox="0 0 18 18"><circle cx="9" cy="9" r="8.3" fill="#3a78d8" stroke="#2a5ab0"/><circle cx="9" cy="9" r="7" fill="#4d8be6"/><path d="M6.2 6.8Q6.2 4.2 9 4.2Q11.8 4.2 11.8 6.6Q11.8 8.2 10 9Q9 9.5 9 11" fill="none" stroke="#fff" stroke-width="2"/><circle cx="9" cy="13.6" r="1.2" fill="#fff"/></svg>
<div class="a" style="left:552px;top:180px;width:1px;height:14px;background:#c9c9c9;"></div>
<div class="a" style="left:556px;top:177px;width:181px;height:23px;background:#efefef;"></div>
<div class="t" style="left:559px;top:183px;font-size:12.5px;color:#000;font-family:'Liberation Sans',sans-serif;transform:scaleX(0.8901);transform-origin:0 0;">Ln 14, Col 1</div>
<div class="a" style="left:738px;top:176px;width:10px;height:24px;background:linear-gradient(90deg,#a9a9a9,#c8c8c8);border-radius:0 3px 3px 0;"></div>
<svg class="a" style="left:740px;top:191px;" width="6" height="6" viewBox="0 0 6 6"><path d="M0 0.5H6M0.5 2.5H5.5L3 5.5Z" fill="#000" stroke="#000" stroke-width="0.8"/></svg>
<div class="a" style="left:88px;top:201px;width:178px;height:21px;background:#bfcddb;"></div>
<div class="t" style="left:88px;top:203px;font-size:12.5px;color:#000;font-family:'Liberation Sans',sans-serif;transform:scaleX(0.9392);transform-origin:0 0;">Project - VBAProject</div>
<div class="a" style="left:245px;top:202px;width:20px;height:19px;background:#f4f4f4;border-right:1px solid #6e6e6e;border-bottom:1px solid #6e6e6e;border-top:1px solid #fff;border-left:1px solid #fff;"></div>
<svg class="a" style="left:249px;top:206px;" width="11" height="10" viewBox="0 0 11 10"><path d="M1 1L10 9M10 1L1 9" stroke="#000" stroke-width="2"/></svg>
<div class="a" style="left:88px;top:222px;width:178px;height:29px;background:#f8f8f8;"></div>
<svg class="a" style="left:96px;top:230px;" width="14" height="12" viewBox="0 0 14 12"><rect x="0.5" y="0.5" width="13" height="11" fill="#e8f0fc" stroke="#3a6ad0"/><rect x="1" y="1" width="12" height="2" fill="#3a6ad0"/><path d="M3 5H6M3 8H6" stroke="#3a6ad0"/><rect x="7" y="4.5" width="5" height="2" fill="#e38a2a"/><rect x="7" y="7.5" width="5" height="2" fill="#e38a2a"/></svg>
<svg class="a" style="left:118px;top:230px;" width="15" height="12" viewBox="0 0 15 12"><rect x="0.5" y="0.5" width="14" height="11" fill="#f6f6f6" stroke="#c4c4c4"/><rect x="2" y="3" width="5" height="2" fill="#d0d0d0"/><rect x="8" y="3" width="5" height="2" fill="#d0d0d0"/><rect x="2" y="7" width="5" height="2" fill="#d0d0d0"/><rect x="8" y="7" width="5" height="2" fill="#d0d0d0"/></svg>
<div class="a" style="left:140px;top:228px;width:1px;height:16px;background:#c9c9c9;"></div>
<div class="a" style="left:144px;top:225px;width:23px;height:22px;background:#eef5fc;border:1px solid #3d8ee0;"></div>
<svg class="a" style="left:147px;top:229px;" width="16" height="13" viewBox="0 0 16 13"><path d="M0.5 2.5Q0.5 0.5 2.5 0.5H6L7.5 2.5H14.5V12.5H0.5Z" fill="#e6b84a" stroke="#a07820"/><path d="M0.5 4.5H15.5V12.5H0.5Z" fill="#f4cf6a" stroke="#b08428"/></svg>
<div class="a" style="left:254px;top:225px;width:11px;height:24px;background:linear-gradient(90deg,#a8a8a8,#c6c6c6);border-radius:0 3px 3px 0;"></div>
<svg class="a" style="left:256px;top:240px;" width="7" height="6" viewBox="0 0 7 6"><path d="M0 0.5H7M0.5 2.5H6.5L3.5 5.5Z" fill="#000" stroke="#000" stroke-width="0.8"/></svg>
<div class="a" style="left:88px;top:251px;width:178px;height:469px;background:#ffffff;border-top:2px solid #8c8c8c;border-left:2px solid #a8a8a8;"></div>
<svg class="a" style="left:100px;top:266px;" width="1" height="106" viewBox="0 0 1 106"><rect x="0" y="0" width="1" height="1" fill="#8c8c8c"/><rect x="0" y="2" width="1" height="1" fill="#8c8c8c"/><rect x="0" y="4" width="1" height="1" fill="#8c8c8c"/><rect x="0" y="6" width="1" height="1" fill="#8c8c8c"/><rect x="0" y="8" width="1" height="1" fill="#8c8c8c"/><rect x="0" y="10" width="1" height="1" fill="#8c8c8c"/><rect x="0" y="12" width="1" height="1" fill="#8c8c8c"/><rect x="0" y="14" width="1" height="1" fill="#8c8c8c"/><rect x="0" y="16" width="1" height="1" fill="#8c8c8c"/><rect x="0" y="18" width="1" height="1" fill="#8c8c8c"/><rect x="0" y="20" width="1" height="1" fill="#8c8c8c"/><rect x="0" y="22" width="1" height="1" fill="#8c8c8c"/><rect x="0" y="24" width="1" height="1" fill="#8c8c8c"/><rect x="0" y="26" width="1" height="1" fill="#8c8c8c"/><rect x="0" y="28" width="1" height="1" fill="#8c8c8c"/><rect x="0" y="30" width="1" height="1" fill="#8c8c8c"/><rect x="0" y="32" width="1" height="1" fill="#8c8c8c"/><rect x="0" y="34" width="1" height="1" fill="#8c8c8c"/><rect x="0" y="36" width="1" height="1" fill="#8c8c8c"/><rect x="0" y="38" width="1" height="1" fill="#8c8c8c"/><rect x="0" y="40" width="1" height="1" fill="#8c8c8c"/><rect x="0" y="42" width="1" height="1" fill="#8c8c8c"/><rect x="0" y="44" width="1" height="1" fill="#8c8c8c"/><rect x="0" y="46" width="1" height="1" fill="#8c8c8c"/><rect x="0" y="48" width="1" height="1" fill="#8c8c8c"/><rect x="0" y="50" width="1" height="1" fill="#8c8c8c"/><rect x="0" y="52" width="1" height="1" fill="#8c8c8c"/><rect x="0" y="54" width="1" height="1" fill="#8c8c8c"/><rect x="0" y="56" width="1" height="1" fill="#8c8c8c"/><rect x="0" y="58" width="1" height="1" fill="#8c8c8c"/><rect x="0" y="60" width="1" height="1" fill="#8c8c8c"/><rect x="0" y="62" width="1" height="1" fill="#8c8c8c"/><rect x="0" y="64" width="1" height="1" fill="#8c8c8c"/><rect x="0" y="66" width="1" height="1" fill="#8c8c8c"/><rect x="0" y="68" width="1" height="1" fill="#8c8c8c"/><rect x="0" y="70" width="1" height="1" fill="#8c8c8c"/><rect x="0" y="72" width="1" height="1" fill="#8c8c8c"/><rect x="0" y="74" width="1" height="1" fill="#8c8c8c"/><rect x="0" y="76" width="1" height="1" fill="#8c8c8c"/><rect x="0" y="78" width="1" height="1" fill="#8c8c8c"/><rect x="0" y="80" width="1" height="1" fill="#8c8c8c"/><rect x="0" y="82" width="1" height="1" fill="#8c8c8c"/><rect x="0" y="84" width="1" height="1" fill="#8c8c8c"/><rect x="0" y="86" width="1" height="1" fill="#8c8c8c"/><rect x="0" y="88" width="1" height="1" fill="#8c8c8c"/><rect x="0" y="90" width="1" height="1" fill="#8c8c8c"/><rect x="0" y="92" width="1" height="1" fill="#8c8c8c"/><rect x="0" y="94" width="1" height="1" fill="#8c8c8c"/><rect x="0" y="96" width="1" height="1" fill="#8c8c8c"/><rect x="0" y="98" width="1" height="1" fill="#8c8c8c"/><rect x="0" y="100" width="1" height="1" fill="#8c8c8c"/><rect x="0" y="102" width="1" height="1" fill="#8c8c8c"/><rect x="0" y="104" width="1" height="1" fill="#8c8c8c"/></svg>
<svg class="a" style="left:105px;top:261px;" width="6" height="1" viewBox="0 0 6 1"><rect x="0" y="0" width="1" height="1" fill="#8c8c8c"/><rect x="2" y="0" width="1" height="1" fill="#8c8c8c"/><rect x="4" y="0" width="1" height="1" fill="#8c8c8c"/></svg>
<svg class="a" style="left:105px;top:277px;" width="6" height="1" viewBox="0 0 6 1"><rect x="0" y="0" width="1" height="1" fill="#8c8c8c"/><rect x="2" y="0" width="1" height="1" fill="#8c8c8c"/><rect x="4" y="0" width="1" height="1" fill="#8c8c8c"/></svg>
<svg class="a" style="left:105px;top:372px;" width="6" height="1" viewBox="0 0 6 1"><rect x="0" y="0" width="1" height="1" fill="#8c8c8c"/><rect x="2" y="0" width="1" height="1" fill="#8c8c8c"/><rect x="4" y="0" width="1" height="1" fill="#8c8c8c"/></svg>
<svg class="a" style="left:119px;top:268px;" width="1" height="73" viewBox="0 0 1 73"><rect x="0" y="0" width="1" height="1" fill="#8c8c8c"/><rect x="0" y="2" width="1" height="1" fill="#8c8c8c"/><rect x="0" y="4" width="1" height="1" fill="#8c8c8c"/><rect x="0" y="6" width="1" height="1" fill="#8c8c8c"/><rect x="0" y="8" width="1" height="1" fill="#8c8c8c"/><rect x="0" y="10" width="1" height="1" fill="#8c8c8c"/><rect x="0" y="12" width="1" height="1" fill="#8c8c8c"/><rect x="0" y="14" width="1" height="1" fill="#8c8c8c"/><rect x="0" y="16" width="1" height="1" fill="#8c8c8c"/><rect x="0" y="18" width="1" height="1" fill="#8c8c8c"/><rect x="0" y="20" width="1" height="1" fill="#8c8c8c"/><rect x="0" y="22" width="1" height="1" fill="#8c8c8c"/><rect x="0" y="24" width="1" height="1" fill="#8c8c8c"/><rect x="0" y="26" width="1" height="1" fill="#8c8c8c"/><rect x="0" y="28" width="1" height="1" fill="#8c8c8c"/><rect x="0" y="30" width="1" height="1" fill="#8c8c8c"/><rect x="0" y="32" width="1" height="1" fill="#8c8c8c"/><rect x="0" y="34" width="1" height="1" fill="#8c8c8c"/><rect x="0" y="36" width="1" height="1" fill="#8c8c8c"/><rect x="0" y="38" width="1" height="1" fill="#8c8c8c"/><rect x="0" y="40" width="1" height="1" fill="#8c8c8c"/><rect x="0" y="42" width="1" height="1" fill="#8c8c8c"/><rect x="0" y="44" width="1" height="1" fill="#8c8c8c"/><rect x="0" y="46" width="1" height="1" fill="#8c8c8c"/><rect x="0" y="48" width="1" height="1" fill="#8c8c8c"/><rect x="0" y="50" width="1" height="1" fill="#8c8c8c"/><rect x="0" y="52" width="1" height="1" fill="#8c8c8c"/><rect x="0" y="54" width="1" height="1" fill="#8c8c8c"/><rect x="0" y="56" width="1" height="1" fill="#8c8c8c"/><rect x="0" y="58" width="1" height="1" fill="#8c8c8c"/><rect x="0" y="60" width="1" height="1" fill="#8c8c8c"/><rect x="0" y="62" width="1" height="1" fill="#8c8c8c"/><rect x="0" y="64" width="1" height="1" fill="#8c8c8c"/><rect x="0" y="66" width="1" height="1" fill="#8c8c8c"/><rect x="0" y="68" width="1" height="1" fill="#8c8c8c"/><rect x="0" y="70" width="1" height="1" fill="#8c8c8c"/><rect x="0" y="72" width="1" height="1" fill="#8c8c8c"/></svg>
<svg class="a" style="left:124px;top:293px;" width="7" height="1" viewBox="0 0 7 1"><rect x="0" y="0" width="1" height="1" fill="#8c8c8c"/><rect x="2" y="0" width="1" height="1" fill="#8c8c8c"/><rect x="4" y="0" width="1" height="1" fill="#8c8c8c"/><rect x="6" y="0" width="1" height="1" fill="#8c8c8c"/></svg>
<svg class="a" style="left:124px;top:341px;" width="7" height="1" viewBox="0 0 7 1"><rect x="0" y="0" width="1" height="1" fill="#8c8c8c"/><rect x="2" y="0" width="1" height="1" fill="#8c8c8c"/><rect x="4" y="0" width="1" height="1" fill="#8c8c8c"/><rect x="6" y="0" width="1" height="1" fill="#8c8c8c"/></svg>
<svg class="a" style="left:138px;top:299px;" width="1" height="26" viewBox="0 0 1 26"><rect x="0" y="0" width="1" height="1" fill="#8c8c8c"/><rect x="0" y="2" width="1" height="1" fill="#8c8c8c"/><rect x="0" y="4" width="1" height="1" fill="#8c8c8c"/><rect x="0" y="6" width="1" height="1" fill="#8c8c8c"/><rect x="0" y="8" width="1" height="1" fill="#8c8c8c"/><rect x="0" y="10" width="1" height="1" fill="#8c8c8c"/><rect x="0" y="12" width="1" height="1" fill="#8c8c8c"/><rect x="0" y="14" width="1" height="1" fill="#8c8c8c"/><rect x="0" y="16" width="1" height="1" fill="#8c8c8c"/><rect x="0" y="18" width="1" height="1" fill="#8c8c8c"/><rect x="0" y="20" width="1" height="1" fill="#8c8c8c"/><rect x="0" y="22" width="1" height="1" fill="#8c8c8c"/><rect x="0" y="24" width="1" height="1" fill="#8c8c8c"/></svg>
<svg class="a" style="left:139px;top:309px;" width="10" height="1" viewBox="0 0 10 1"><rect x="0" y="0" width="1" height="1" fill="#8c8c8c"/><rect x="2" y="0" width="1" height="1" fill="#8c8c8c"/><rect x="4" y="0" width="1" height="1" fill="#8c8c8c"/><rect x="6" y="0" width="1" height="1" fill="#8c8c8c"/><rect x="8" y="0" width="1" height="1" fill="#8c8c8c"/></svg>
<svg class="a" style="left:139px;top:325px;" width="10" height="1" viewBox="0 0 10 1"><rect x="0" y="0" width="1" height="1" fill="#8c8c8c"/><rect x="2" y="0" width="1" height="1" fill="#8c8c8c"/><rect x="4" y="0" width="1" height="1" fill="#8c8c8c"/><rect x="6" y="0" width="1" height="1" fill="#8c8c8c"/><rect x="8" y="0" width="1" height="1" fill="#8c8c8c"/></svg>
<svg class="a" style="left:138px;top:347px;" width="1" height="9" viewBox="0 0 1 9"><rect x="0" y="0" width="1" height="1" fill="#8c8c8c"/><rect x="0" y="2" width="1" height="1" fill="#8c8c8c"/><rect x="0" y="4" width="1" height="1" fill="#8c8c8c"/><rect x="0" y="6" width="1" height="1" fill="#8c8c8c"/><rect x="0" y="8" width="1" height="1" fill="#8c8c8c"/></svg>
<svg class="a" style="left:139px;top:356px;" width="10" height="1" viewBox="0 0 10 1"><rect x="0" y="0" width="1" height="1" fill="#8c8c8c"/><rect x="2" y="0" width="1" height="1" fill="#8c8c8c"/><rect x="4" y="0" width="1" height="1" fill="#8c8c8c"/><rect x="6" y="0" width="1" height="1" fill="#8c8c8c"/><rect x="8" y="0" width="1" height="1" fill="#8c8c8c"/></svg>
<div class="a" style="left:96px;top:257px;width:9px;height:9px;background:linear-gradient(#fdfdfd,#dedede);border:1px solid #9a9a9a;border-radius:1.5px;"></div>
<div class="a" style="left:98px;top:261px;width:5px;height:1px;background:#2d4fa3;"></div>
<div class="a" style="left:100px;top:259px;width:1px;height:5px;background:#2d4fa3;"></div>
<svg class="a" style="left:111px;top:253px;" width="17" height="16" viewBox="0 0 17 16"><path d="M0.8 11.2L4.5 9.2L15.5 11.6L8 14.8Z" fill="#fff" stroke="#000" stroke-width="1.1" stroke-dasharray="1.4 0.7"/><path d="M2 1.8V8.2L4.8 11" fill="none" stroke="#000" stroke-width="1.1"/><path d="M2.3 2.3L5.5 4L6 6L8.6 7.4L9.6 9.4L13.4 11.8" fill="none" stroke="#000" stroke-width="1.1"/><path d="M2.6 3.2L5 4.6M6 6.8L8.4 8.2M9.8 10.4L12.6 12" fill="none" stroke="#00e0f0" stroke-width="1.5"/><path d="M4.8 11L7.6 10.6L10 12.8" fill="none" stroke="#000" stroke-width="1"/><path d="M10 4.5L13 1.5M10.5 5.5L12.3 6.5" stroke="#000" stroke-width="0.8"/><ellipse cx="13.6" cy="1.6" rx="1.9" ry="1.2" fill="#00b000" stroke="#000" stroke-width="0.7"/><ellipse cx="10" cy="4.7" rx="1.6" ry="1" fill="#f0c000" stroke="#000" stroke-width="0.7"/><ellipse cx="12.6" cy="7.8" rx="1" ry="1.9" fill="#e000e0" stroke="#000" stroke-width="0.7"/></svg>
<div class="t" style="left:132px;top:256px;font-size:10.7px;color:#000;font-family:'Liberation Sans',sans-serif;font-weight:bold;transform:scaleX(1.0663);transform-origin:0 0;">atpvbaen.xls (ATPVBAEN</div>
<div class="a" style="left:96px;top:273px;width:9px;height:9px;background:linear-gradient(#fdfdfd,#dedede);border:1px solid #9a9a9a;border-radius:1.5px;"></div>
<div class="a" style="left:98px;top:277px;width:5px;height:1px;background:#2d4fa3;"></div>
<svg class="a" style="left:111px;top:269px;" width="17" height="16" viewBox="0 0 17 16"><path d="M0.8 11.2L4.5 9.2L15.5 11.6L8 14.8Z" fill="#fff" stroke="#000" stroke-width="1.1" stroke-dasharray="1.4 0.7"/><path d="M2 1.8V8.2L4.8 11" fill="none" stroke="#000" stroke-width="1.1"/><path d="M2.3 2.3L5.5 4L6 6L8.6 7.4L9.6 9.4L13.4 11.8" fill="none" stroke="#000" stroke-width="1.1"/><path d="M2.6 3.2L5 4.6M6 6.8L8.4 8.2M9.8 10.4L12.6 12" fill="none" stroke="#00e0f0" stroke-width="1.5"/><path d="M4.8 11L7.6 10.6L10 12.8" fill="none" stroke="#000" stroke-width="1"/><path d="M10 4.5L13 1.5M10.5 5.5L12.3 6.5" stroke="#000" stroke-width="0.8"/><ellipse cx="13.6" cy="1.6" rx="1.9" ry="1.2" fill="#00b000" stroke="#000" stroke-width="0.7"/><ellipse cx="10" cy="4.7" rx="1.6" ry="1" fill="#f0c000" stroke="#000" stroke-width="0.7"/><ellipse cx="12.6" cy="7.8" rx="1" ry="1.9" fill="#e000e0" stroke="#000" stroke-width="0.7"/></svg>
<div class="t" style="left:132px;top:272px;font-size:10.7px;color:#000;font-family:'Liberation Sans',sans-serif;font-weight:bold;transform:scaleX(1.0819);transform-origin:0 0;">VBAProject (Book5)</div>
<div class="a" style="left:115px;top:289px;width:9px;height:9px;background:linear-gradient(#fdfdfd,#dedede);border:1px solid #9a9a9a;border-radius:1.5px;"></div>
<div class="a" style="left:117px;top:293px;width:5px;height:1px;background:#2d4fa3;"></div>
<svg class="a" style="left:131px;top:287px;" width="16" height="13" viewBox="0 0 16 13"><path d="M2.5 7V2.5Q2.5 0.5 4.5 0.5H8L9 1.5H14.5V7" fill="#f6f6d8" stroke="#7a7a7a" stroke-width="1"/><path d="M3 3.5H13" stroke="#c8c860" stroke-width="1.5"/><path d="M0.5 5.5H13.5L14.5 11.5H2Z" fill="#eeee66" stroke="#7a7a7a" stroke-width="1"/><path d="M13 5L15.5 5.5L14.5 10Z" fill="#000"/></svg>
<div class="t" style="left:150px;top:288px;font-size:11px;color:#000;font-family:'Liberation Sans',sans-serif;transform:scaleX(0.9659);transform-origin:0 0;">Microsoft Excel Objects</div>
<svg class="a" style="left:149px;top:302px;" width="17" height="15" viewBox="0 0 17 15"><path d="M4.5 0.5H13.5L15.5 2.5V13.5H4.5Z" fill="#fff" stroke="#000" stroke-width="1"/><path d="M13.5 0.5V2.5H15.5" fill="none" stroke="#000" stroke-width="0.8"/><rect x="1" y="2" width="10" height="9" fill="#000"/><rect x="2" y="3" width="2" height="1.5" fill="#fff"/><rect x="5" y="3" width="2" height="1.5" fill="#fff"/><rect x="8" y="3" width="2" height="1.5" fill="#fff"/><rect x="2" y="5.5" width="2" height="1.5" fill="#fff"/><rect x="5" y="5.5" width="2" height="1.5" fill="#fff"/><rect x="8" y="5.5" width="2" height="1.5" fill="#fff"/><rect x="2" y="8" width="2" height="2" fill="#fff"/><rect x="5" y="8" width="2" height="2" fill="#fff"/><rect x="8" y="8" width="2" height="2" fill="#fff"/></svg>
<div class="t" style="left:169px;top:304px;font-size:11px;color:#000;font-family:'Liberation Sans',sans-serif;transform:scaleX(0.9736);transform-origin:0 0;">Sheet1 (Sheet1)</div>
<svg class="a" style="left:149px;top:317px;" width="16" height="17" viewBox="0 0 16 17"><path d="M4.5 0.5H11.5L14.5 3.5V15.5H4.5Z" fill="#fff" stroke="#000" stroke-width="1.1"/><path d="M11.5 0.5V3.5H14.5" fill="none" stroke="#000" stroke-width="0.8"/><path d="M1.5 4.5L8.5 11.5M8.5 4.5L1.5 11.5" stroke="#128212" stroke-width="2.6"/><path d="M1.5 4.5L8.5 11.5M8.5 4.5L1.5 11.5" stroke="#9ad29a" stroke-width="0.7"/></svg>
<div class="t" style="left:169px;top:320px;font-size:11px;color:#000;font-family:'Liberation Sans',sans-serif;transform:scaleX(0.9558);transform-origin:0 0;">ThisWorkbook</div>
<div class="a" style="left:115px;top:337px;width:9px;height:9px;background:linear-gradient(#fdfdfd,#dedede);border:1px solid #9a9a9a;border-radius:1.5px;"></div>
<div class="a" style="left:117px;top:341px;width:5px;height:1px;background:#2d4fa3;"></div>
<svg class="a" style="left:131px;top:335px;" width="16" height="13" viewBox="0 0 16 13"><path d="M2.5 7V2.5Q2.5 0.5 4.5 0.5H8L9 1.5H14.5V7" fill="#f6f6d8" stroke="#7a7a7a" stroke-width="1"/><path d="M3 3.5H13" stroke="#c8c860" stroke-width="1.5"/><path d="M0.5 5.5H13.5L14.5 11.5H2Z" fill="#eeee66" stroke="#7a7a7a" stroke-width="1"/><path d="M13 5L15.5 5.5L14.5 10Z" fill="#000"/></svg>
<div class="t" style="left:150px;top:336px;font-size:11px;color:#000;font-family:'Liberation Sans',sans-serif;transform:scaleX(0.9380);transform-origin:0 0;">Modules</div>
<div class="a" style="left:168px;top:349px;width:43px;height:15px;background:#ebebeb;"></div>
<svg class="a" style="left:149px;top:347px;" width="17" height="17" viewBox="0 0 17 17"><path d="M2.5 9.5L9 3.5M9 7L12.5 14M13 3.5L9 9" stroke="#000" stroke-width="2.4"/><path d="M2.5 9.5L9 3.5M9 7L12.5 14M13 3.5L9 9" stroke="#00d0d0" stroke-width="1.2" stroke-dasharray="1 1"/><ellipse cx="7.8" cy="2.8" rx="2" ry="2.8" fill="#f0e000" stroke="#000" stroke-width="1"/><ellipse cx="12.8" cy="3" rx="2" ry="2.8" fill="#e000e0" stroke="#000" stroke-width="1"/><ellipse cx="2.4" cy="9.6" rx="2.4" ry="2" fill="#e000e0" stroke="#000" stroke-width="1" transform="rotate(25 2.4 9.6)"/><rect x="5.5" y="7.5" width="4" height="3" fill="#00c000" stroke="#000" stroke-width="1"/><rect x="11.5" y="7.5" width="4" height="3" fill="#00d8d8" stroke="#000" stroke-width="1"/><ellipse cx="12.4" cy="13.8" rx="2.2" ry="1.8" fill="#f0e000" stroke="#000" stroke-width="1" transform="rotate(-40 12.4 13.8)"/></svg>
<div class="t" style="left:169px;top:351px;font-size:11px;color:#000;font-family:'Liberation Sans',sans-serif;transform:scaleX(0.9479);transform-origin:0 0;">Module1</div>
<div class="a" style="left:96px;top:368px;width:9px;height:9px;background:linear-gradient(#fdfdfd,#dedede);border:1px solid #9a9a9a;border-radius:1.5px;"></div>
<div class="a" style="left:98px;top:372px;width:5px;height:1px;background:#2d4fa3;"></div>
<div class="a" style="left:100px;top:370px;width:1px;height:5px;background:#2d4fa3;"></div>
<svg class="a" style="left:111px;top:364px;" width="17" height="16" viewBox="0 0 17 16"><path d="M0.8 11.2L4.5 9.2L15.5 11.6L8 14.8Z" fill="#fff" stroke="#000" stroke-width="1.1" stroke-dasharray="1.4 0.7"/><path d="M2 1.8V8.2L4.8 11" fill="none" stroke="#000" stroke-width="1.1"/><path d="M2.3 2.3L5.5 4L6 6L8.6 7.4L9.6 9.4L13.4 11.8" fill="none" stroke="#000" stroke-width="1.1"/><path d="M2.6 3.2L5 4.6M6 6.8L8.4 8.2M9.8 10.4L12.6 12" fill="none" stroke="#00e0f0" stroke-width="1.5"/><path d="M4.8 11L7.6 10.6L10 12.8" fill="none" stroke="#000" stroke-width="1"/><path d="M10 4.5L13 1.5M10.5 5.5L12.3 6.5" stroke="#000" stroke-width="0.8"/><ellipse cx="13.6" cy="1.6" rx="1.9" ry="1.2" fill="#00b000" stroke="#000" stroke-width="0.7"/><ellipse cx="10" cy="4.7" rx="1.6" ry="1" fill="#f0c000" stroke="#000" stroke-width="0.7"/><ellipse cx="12.6" cy="7.8" rx="1" ry="1.9" fill="#e000e0" stroke="#000" stroke-width="0.7"/></svg>
<div class="t" style="left:132px;top:367px;font-size:10.7px;color:#000;font-family:'Liberation Sans',sans-serif;font-weight:bold;transform:scaleX(1.0638);transform-origin:0 0;">VBAProject (FUNCRES.XLAM</div>
<div class="a" style="left:265px;top:201px;width:7px;height:519px;background:#f0f0f0;"></div>
<div class="a" style="left:272px;top:201px;width:966px;height:519px;background:#ababab;border-left:2px solid #6f6f6f;border-top:2px solid #6f6f6f;"></div>
<div class="a" style="left:300px;top:228px;width:948px;height:500px;background:linear-gradient(#93b0d0 0px,#a3bdda 12px,#b9d0e9 30px,#bcd2ea 100%);border:1px solid #4a4a4a;border-top-left-radius:7px;box-shadow:inset 1px 1px 0 #dfe9f5;"></div>
<svg class="a" style="left:310px;top:239px;" width="17" height="17" viewBox="0 0 17 17"><path d="M2.5 9.5L9 3.5M9 7L12.5 14M13 3.5L9 9" stroke="#000" stroke-width="2.4"/><path d="M2.5 9.5L9 3.5M9 7L12.5 14M13 3.5L9 9" stroke="#00d0d0" stroke-width="1.2" stroke-dasharray="1 1"/><ellipse cx="7.8" cy="2.8" rx="2" ry="2.8" fill="#f0e000" stroke="#000" stroke-width="1"/><ellipse cx="12.8" cy="3" rx="2" ry="2.8" fill="#e000e0" stroke="#000" stroke-width="1"/><ellipse cx="2.4" cy="9.6" rx="2.4" ry="2" fill="#e000e0" stroke="#000" stroke-width="1" transform="rotate(25 2.4 9.6)"/><rect x="5.5" y="7.5" width="4" height="3" fill="#00c000" stroke="#000" stroke-width="1"/><rect x="11.5" y="7.5" width="4" height="3" fill="#00d8d8" stroke="#000" stroke-width="1"/><ellipse cx="12.4" cy="13.8" rx="2.2" ry="1.8" fill="#f0e000" stroke="#000" stroke-width="1" transform="rotate(-40 12.4 13.8)"/></svg>
<div class="t" style="left:330px;top:242px;font-size:12.5px;color:#1a1a1a;font-family:'Liberation Sans',sans-serif;transform:scaleX(0.9399);transform-origin:0 0;">Book5 - Module1 (Code)</div>
<div class="a" style="left:1236px;top:238px;width:10px;height:18px;background:#dfe8f3;border:1px solid #7f90a8;border-radius:3px;"></div>
<div class="a" style="left:308px;top:259px;width:930px;height:461px;background:#f0f0f0;"></div>
<div class="a" style="left:318px;top:261px;width:500px;height:22px;background:#ffffff;border:1px solid #a3a3a3;border-bottom-color:#5a5a5a;border-right-color:#cfcfcf;"></div>
<div class="t" style="left:322px;top:266px;font-size:11px;color:#000;font-family:'Liberation Sans',sans-serif;font-weight:bold;transform:scaleX(1.0354);transform-origin:0 0;">(General)</div>
<svg class="a" style="left:803px;top:270px;" width="10" height="6" viewBox="0 0 10 6"><path d="M0.5 0.5L5 5L9.5 0.5" fill="none" stroke="#333" stroke-width="1.1"/></svg>
<div class="a" style="left:828px;top:261px;width:420px;height:22px;background:#ffffff;border:1px solid #a3a3a3;border-bottom-color:#5a5a5a;"></div>
<div class="t" style="left:831px;top:266px;font-size:11px;color:#000;font-family:'Liberation Sans',sans-serif;font-weight:bold;transform:scaleX(1.0386);transform-origin:0 0;">DeleteShapesInRange</div>
<div class="a" style="left:309px;top:285px;width:929px;height:435px;background:#f0f0f0;border-top:2px solid #5e5e5e;border-left:1px solid #8a8a8a;"></div>
<div class="a" style="left:330px;top:287px;width:908px;height:433px;background:#ffffff;border-left:1px solid #000;"></div>
<div class="t" style="left:342px;top:291px;font-size:13.25px;color:#000;font-family:'Liberation Mono',monospace;"><span class="k">Sub</span> DeleteShapesInRange()</div>
<div class="t" style="left:342px;top:307px;font-size:13.25px;color:#000;font-family:'Liberation Mono',monospace;">    <span class="k">Dim</span> shp <span class="k">As</span> Shape</div>
<div class="t" style="left:342px;top:322px;font-size:13.25px;color:#000;font-family:'Liberation Mono',monospace;">    <span class="k">Dim</span> rng <span class="k">As</span> Range</div>
<div class="t" style="left:342px;top:338px;font-size:13.25px;color:#000;font-family:'Liberation Mono',monospace;">    <span class="k">Dim</span> ws <span class="k">As</span> Worksheet</div>
<div class="t" style="left:342px;top:354px;font-size:13.25px;color:#000;font-family:'Liberation Mono',monospace;">    <span class="k">Set</span> ws = ActiveSheet</div>
<div class="t" style="left:342px;top:370px;font-size:13.25px;color:#000;font-family:'Liberation Mono',monospace;">    <span class="k">Set</span> rng = Selection</div>
<div class="t" style="left:342px;top:386px;font-size:13.25px;color:#000;font-family:'Liberation Mono',monospace;"></div>
<div class="t" style="left:342px;top:402px;font-size:13.25px;color:#000;font-family:'Liberation Mono',monospace;">    <span class="k">For Each</span> shp <span class="k">In</span> ws.Shapes</div>
<div class="t" style="left:342px;top:418px;font-size:13.25px;color:#000;font-family:'Liberation Mono',monospace;">        <span class="k">If Not</span> Intersect(shp.TopLeftCell, rng) <span class="k">Is Nothing Then</span></div>
<div class="t" style="left:342px;top:434px;font-size:13.25px;color:#000;font-family:'Liberation Mono',monospace;">            shp.Delete</div>
<div class="t" style="left:342px;top:450px;font-size:13.25px;color:#000;font-family:'Liberation Mono',monospace;">        <span class="k">End If</span></div>
<div class="t" style="left:342px;top:466px;font-size:13.25px;color:#000;font-family:'Liberation Mono',monospace;">    <span class="k">Next</span> shp</div>
<div class="t" style="left:342px;top:481px;font-size:13.25px;color:#000;font-family:'Liberation Mono',monospace;"><span class="k">End Sub</span></div>
<div class="a" style="left:342px;top:495px;width:1px;height:16px;background:#000;"></div>
</body></html>
